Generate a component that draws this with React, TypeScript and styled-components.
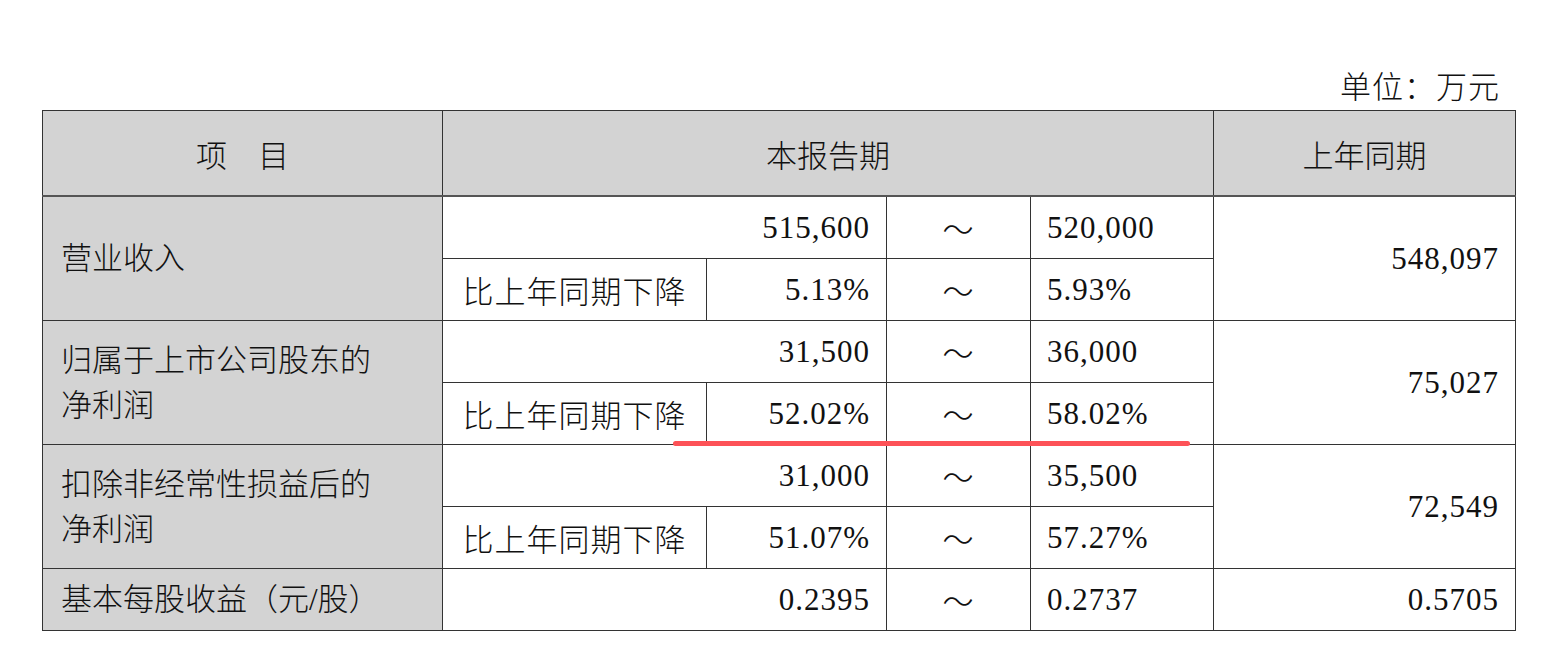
import styled, { createGlobalStyle } from "styled-components";

// STYLE
const GlobalStyle = createGlobalStyle`
  html, body {
    margin: 0;
    padding: 0;
    background: #fff;
  }
  body {
    font-family: "Liberation Serif", "Noto Sans CJK SC", serif;
    color: #111;
  }
`;

const Page = styled.div`
  width: 1473px;
  margin-left: 42px;
  padding-top: 65px;
`;

const Unit = styled.div`
  text-align: right;
  padding-right: 15px;
  font-size: 31px;
  line-height: 45px;
  font-weight: 300;
  letter-spacing: 1px;
`;

const TableWrap = styled.div`
  position: relative;
`;

const Table = styled.table`
  width: 1473px;
  border-collapse: collapse;
  table-layout: fixed;
  font-size: 31px;
  font-weight: 300;
`;

const HeadCell = styled.th`
  height: 84px;
  padding: 0;
  background: #d3d3d3;
  border: 1px solid #333;
  border-bottom: 2px solid #555;
  font-weight: 300;
  text-align: center;
  vertical-align: middle;
`;

const ItemCell = styled.td`
  padding: 0 18px;
  background: #d3d3d3;
  border: 1px solid #333;
  line-height: 45px;
  text-align: left;
  vertical-align: middle;
`;

const Cell = styled.td<{ $align?: "left" | "right" | "center" }>`
  height: 61px;
  padding: 0 16px;
  border: 1px solid #333;
  text-align: ${(p) => p.$align ?? "right"};
  vertical-align: middle;
  white-space: nowrap;
  letter-spacing: 1px;
`;

const Mark = styled.div`
  position: absolute;
  left: 631px;
  top: 331px;
  width: 517px;
  height: 5px;
  border-radius: 3px;
  background: #fd5257;
`;

// DATA
type Group = {
  label: React.ReactNode;
  from: string;
  to: string;
  fromPct: string;
  toPct: string;
  last: string;
};

const groups: Group[] = [
  { label: "营业收入", from: "515,600", to: "520,000", fromPct: "5.13%", toPct: "5.93%", last: "548,097" },
  {
    label: (
      <>
        归属于上市公司股东的
        <br />
        净利润
      </>
    ),
    from: "31,500",
    to: "36,000",
    fromPct: "52.02%",
    toPct: "58.02%",
    last: "75,027",
  },
  {
    label: (
      <>
        扣除非经常性损益后的
        <br />
        净利润
      </>
    ),
    from: "31,000",
    to: "35,500",
    fromPct: "51.07%",
    toPct: "57.27%",
    last: "72,549",
  },
];

// COMP
const GroupRows = ({ g }: { g: Group }) => (
  <>
    <tr>
      <ItemCell rowSpan={2}>{g.label}</ItemCell>
      <Cell colSpan={2}>{g.from}</Cell>
      <Cell $align="center">～</Cell>
      <Cell $align="left">{g.to}</Cell>
      <Cell rowSpan={2}>{g.last}</Cell>
    </tr>
    <tr>
      <Cell $align="center">比上年同期下降</Cell>
      <Cell>{g.fromPct}</Cell>
      <Cell $align="center">～</Cell>
      <Cell $align="left">{g.toPct}</Cell>
    </tr>
  </>
);

const App = () => {
  return (
    <Page>
      <GlobalStyle />
      <Unit>单位：万元</Unit>
      <TableWrap>
        <Table>
          <colgroup>
            <col style={{ width: 400 }} />
            <col style={{ width: 264 }} />
            <col style={{ width: 180 }} />
            <col style={{ width: 144 }} />
            <col style={{ width: 183 }} />
            <col style={{ width: 302 }} />
          </colgroup>
          <thead>
            <tr>
              <HeadCell>项　目</HeadCell>
              <HeadCell colSpan={4}>本报告期</HeadCell>
              <HeadCell>上年同期</HeadCell>
            </tr>
          </thead>
          <tbody>
            {groups.map((g, i) => (
              <GroupRows key={i} g={g} />
            ))}
            <tr>
              <ItemCell>基本每股收益（元/股）</ItemCell>
              <Cell colSpan={2}>0.2395</Cell>
              <Cell $align="center">～</Cell>
              <Cell $align="left">0.2737</Cell>
              <Cell>0.5705</Cell>
            </tr>
          </tbody>
        </Table>
        <Mark />
      </TableWrap>
    </Page>
  );
};

export default App;
